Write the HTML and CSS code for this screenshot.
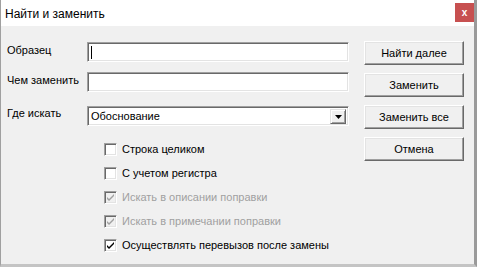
FILE: index.html
```html
<!DOCTYPE html>
<html lang="ru">
<head>
    <meta charset="UTF-8">
    <title>Найти и заменить</title>
    <link rel="stylesheet" href="styles.css">
</head>
<body>
    <div class="window">
        <div class="titlebar">
            <span class="title">Найти и заменить</span>
            <button class="close">x</button>
        </div>
        <div class="content">
            <div class="form">
                <div class="row row-first">
                    <label class="label">Образец</label>
                    <div class="field"><span class="caret"></span></div>
                </div>
                <div class="row row-second">
                    <label class="label">Чем заменить</label>
                    <div class="field"></div>
                </div>
                <div class="row row-third">
                    <label class="label">Где искать</label>
                    <div class="field combo">
                        <span class="combo-text">Обоснование</span>
                        <span class="combo-btn">
                            <svg width="7" height="4" viewBox="0 0 7 4"><path d="M0 0h7L3.5 4z" fill="#000"/></svg>
                        </span>
                    </div>
                </div>
                <div class="checks">
                    <div class="check">
                        <span class="box"></span>
                        <span>Строка целиком</span>
                    </div>
                    <div class="check">
                        <span class="box"></span>
                        <span>С учетом регистра</span>
                    </div>
                    <div class="check disabled">
                        <span class="box">
                            <svg width="9" height="9" viewBox="0 0 9 9"><path d="M1 4l2 2 5-5v2l-5 5-2-2z" fill="#a0a0a0"/></svg>
                        </span>
                        <span>Искать в описании поправки</span>
                    </div>
                    <div class="check disabled">
                        <span class="box">
                            <svg width="9" height="9" viewBox="0 0 9 9"><path d="M1 4l2 2 5-5v2l-5 5-2-2z" fill="#a0a0a0"/></svg>
                        </span>
                        <span>Искать в примечании поправки</span>
                    </div>
                    <div class="check">
                        <span class="box">
                            <svg width="9" height="9" viewBox="0 0 9 9"><path d="M1 4l2 2 5-5v2l-5 5-2-2z" fill="#000"/></svg>
                        </span>
                        <span>Осуществлять перевызов после замены</span>
                    </div>
                </div>
            </div>
            <div class="buttons">
                <button class="btn">Найти далее</button>
                <button class="btn">Заменить</button>
                <button class="btn">Заменить все</button>
                <button class="btn">Отмена</button>
            </div>
        </div>
    </div>
</body>
</html>
```

FILE: styles.css
```css
body {
    margin: 0;
    font-family: 'Liberation Sans', Arial, sans-serif;
    font-size: 11px;
    color: #000;
    background: #fff;
}
.window {
    width: 477px;
    height: 267px;
    box-sizing: border-box;
    display: flex;
    flex-direction: column;
    background: #f0f0f0;
    border-left: 1px solid #a0a0a0;
    border-right: 3px solid #9a9a9a;
    border-bottom: 3px solid #c4c4c4;
}
.titlebar {
    height: 26px;
    flex: none;
    display: flex;
    align-items: flex-start;
    justify-content: space-between;
    background: #fff;
}
.title {
    font-size: 12px;
    margin: 7px 0 0 4px;
    color: #000;
}
.close {
    width: 19px;
    height: 19px;
    margin: 3px 0 0 0;
    padding: 0;
    border: none;
    background: #c75050;
    color: #fff;
    font-family: 'Liberation Sans', Arial, sans-serif;
    font-weight: bold;
    font-size: 10px;
    line-height: 17px;
}
.content {
    display: flex;
    padding: 15px 0 0 6px;
}
.form {
    width: 343px;
}
.row {
    display: flex;
    align-items: center;
    height: 20px;
}
.row-first {
    margin-top: 1px;
}
.row-second {
    margin-top: 10px;
}
.row-third {
    margin-top: 14px;
}
.label {
    width: 80px;
    flex: none;
    margin-top: -4px;
}
.row-third .label {
    margin-top: -6px;
}
.field {
    position: relative;
    width: 262px;
    height: 20px;
    box-sizing: border-box;
    background: #fff;
    border: 1px solid;
    border-color: #a0a0a0 #fff #fff #a0a0a0;
    box-shadow: inset 1px 1px #696969, inset -1px -1px #e3e3e3;
    display: flex;
    align-items: center;
}
.caret {
    width: 1px;
    height: 13px;
    margin-left: 3px;
    background: #000;
}
.combo-text {
    margin-left: 3px;
}
.combo-btn {
    position: absolute;
    right: 2px;
    top: 2px;
    width: 16px;
    height: 15px;
    box-sizing: border-box;
    background: #f0f0f0;
    border: 1px solid;
    border-color: #e3e3e3 #696969 #696969 #e3e3e3;
    box-shadow: inset 1px 1px #fff, inset -1px -1px #a0a0a0;
    display: flex;
    align-items: center;
    justify-content: center;
}
.checks {
    margin: 11px 0 0 97px;
}
.check {
    display: flex;
    align-items: center;
    height: 24px;
    gap: 5px;
}
.check.disabled {
    color: #a0a0a0;
}
.box {
    width: 13px;
    height: 13px;
    box-sizing: border-box;
    flex: none;
    background: #fff;
    border: 1px solid;
    border-color: #a0a0a0 #fff #fff #a0a0a0;
    box-shadow: inset 1px 1px #696969, inset -1px -1px #e3e3e3;
    display: flex;
    align-items: center;
    justify-content: center;
}
.check.disabled .box {
    background: #f0f0f0;
}
.buttons {
    display: flex;
    flex-direction: column;
    gap: 8px;
    margin-left: 14px;
}
.btn {
    width: 100px;
    height: 24px;
    padding: 0;
    font-family: 'Liberation Sans', Arial, sans-serif;
    font-size: 11px;
    color: #000;
    background: #f0f0f0;
    border: 1px solid;
    border-color: #fff #696969 #696969 #fff;
    box-shadow: inset -1px -1px #a0a0a0, inset 1px 1px #e3e3e3;
}
```
